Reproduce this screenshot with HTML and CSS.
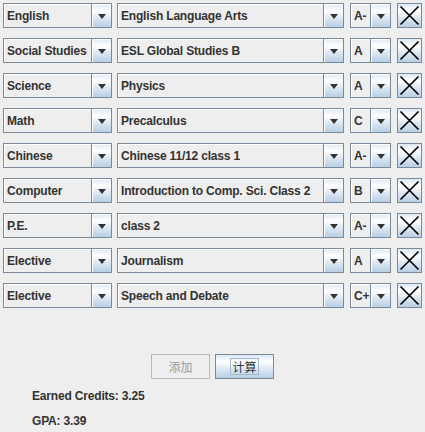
FILE: index.html
```html
<!DOCTYPE html>
<html>
<head>
<meta charset="utf-8">
<link rel="stylesheet" href="styles.css">
</head>
<body>
<div class="rows">
  <div class="row">
    <div class="combo c-subj"><span class="val">English</span><span class="arrow"><i class="tri"></i></span></div>
    <div class="combo c-course"><span class="val">English Language Arts</span><span class="arrow"><i class="tri"></i></span></div>
    <div class="combo c-grade"><span class="val">A-</span><span class="arrow"><i class="tri"></i></span></div>
    <div class="xbtn"><svg viewBox="0 0 25 25" width="25" height="25"><path d="M3.5 3.5L21.5 21.5M21.5 3.5L3.5 21.5" stroke="#000" stroke-width="1.7" fill="none"/></svg></div>
  </div>
  <div class="row">
    <div class="combo c-subj"><span class="val">Social Studies</span><span class="arrow"><i class="tri"></i></span></div>
    <div class="combo c-course"><span class="val">ESL Global Studies B</span><span class="arrow"><i class="tri"></i></span></div>
    <div class="combo c-grade"><span class="val">A</span><span class="arrow"><i class="tri"></i></span></div>
    <div class="xbtn"><svg viewBox="0 0 25 25" width="25" height="25"><path d="M3.5 3.5L21.5 21.5M21.5 3.5L3.5 21.5" stroke="#000" stroke-width="1.7" fill="none"/></svg></div>
  </div>
  <div class="row">
    <div class="combo c-subj"><span class="val">Science</span><span class="arrow"><i class="tri"></i></span></div>
    <div class="combo c-course"><span class="val">Physics</span><span class="arrow"><i class="tri"></i></span></div>
    <div class="combo c-grade"><span class="val">A</span><span class="arrow"><i class="tri"></i></span></div>
    <div class="xbtn"><svg viewBox="0 0 25 25" width="25" height="25"><path d="M3.5 3.5L21.5 21.5M21.5 3.5L3.5 21.5" stroke="#000" stroke-width="1.7" fill="none"/></svg></div>
  </div>
  <div class="row">
    <div class="combo c-subj"><span class="val">Math</span><span class="arrow"><i class="tri"></i></span></div>
    <div class="combo c-course"><span class="val">Precalculus</span><span class="arrow"><i class="tri"></i></span></div>
    <div class="combo c-grade"><span class="val">C</span><span class="arrow"><i class="tri"></i></span></div>
    <div class="xbtn"><svg viewBox="0 0 25 25" width="25" height="25"><path d="M3.5 3.5L21.5 21.5M21.5 3.5L3.5 21.5" stroke="#000" stroke-width="1.7" fill="none"/></svg></div>
  </div>
  <div class="row">
    <div class="combo c-subj"><span class="val">Chinese</span><span class="arrow"><i class="tri"></i></span></div>
    <div class="combo c-course"><span class="val">Chinese 11/12 class 1</span><span class="arrow"><i class="tri"></i></span></div>
    <div class="combo c-grade"><span class="val">A-</span><span class="arrow"><i class="tri"></i></span></div>
    <div class="xbtn"><svg viewBox="0 0 25 25" width="25" height="25"><path d="M3.5 3.5L21.5 21.5M21.5 3.5L3.5 21.5" stroke="#000" stroke-width="1.7" fill="none"/></svg></div>
  </div>
  <div class="row">
    <div class="combo c-subj"><span class="val">Computer</span><span class="arrow"><i class="tri"></i></span></div>
    <div class="combo c-course"><span class="val">Introduction to Comp. Sci. Class 2</span><span class="arrow"><i class="tri"></i></span></div>
    <div class="combo c-grade"><span class="val">B</span><span class="arrow"><i class="tri"></i></span></div>
    <div class="xbtn"><svg viewBox="0 0 25 25" width="25" height="25"><path d="M3.5 3.5L21.5 21.5M21.5 3.5L3.5 21.5" stroke="#000" stroke-width="1.7" fill="none"/></svg></div>
  </div>
  <div class="row">
    <div class="combo c-subj"><span class="val">P.E.</span><span class="arrow"><i class="tri"></i></span></div>
    <div class="combo c-course"><span class="val">class 2</span><span class="arrow"><i class="tri"></i></span></div>
    <div class="combo c-grade"><span class="val">A-</span><span class="arrow"><i class="tri"></i></span></div>
    <div class="xbtn"><svg viewBox="0 0 25 25" width="25" height="25"><path d="M3.5 3.5L21.5 21.5M21.5 3.5L3.5 21.5" stroke="#000" stroke-width="1.7" fill="none"/></svg></div>
  </div>
  <div class="row">
    <div class="combo c-subj"><span class="val">Elective</span><span class="arrow"><i class="tri"></i></span></div>
    <div class="combo c-course"><span class="val">Journalism</span><span class="arrow"><i class="tri"></i></span></div>
    <div class="combo c-grade"><span class="val">A</span><span class="arrow"><i class="tri"></i></span></div>
    <div class="xbtn"><svg viewBox="0 0 25 25" width="25" height="25"><path d="M3.5 3.5L21.5 21.5M21.5 3.5L3.5 21.5" stroke="#000" stroke-width="1.7" fill="none"/></svg></div>
  </div>
  <div class="row">
    <div class="combo c-subj"><span class="val">Elective</span><span class="arrow"><i class="tri"></i></span></div>
    <div class="combo c-course"><span class="val">Speech and Debate</span><span class="arrow"><i class="tri"></i></span></div>
    <div class="combo c-grade"><span class="val">C+</span><span class="arrow"><i class="tri"></i></span></div>
    <div class="xbtn"><svg viewBox="0 0 25 25" width="25" height="25"><path d="M3.5 3.5L21.5 21.5M21.5 3.5L3.5 21.5" stroke="#000" stroke-width="1.7" fill="none"/></svg></div>
  </div>
</div>
<div class="actions">
  <button class="btn btn-disabled" disabled>添加</button>
  <button class="btn btn-primary"><span class="focus">计算</span></button>
</div>
<div class="info">
  <div class="label">Earned Credits: 3.25</div>
  <div class="label">GPA: 3.39</div>
</div>
</body>
</html>
```

FILE: styles.css
```css
html, body {
  margin: 0;
  padding: 0;
  background: #eeeeee;
  width: 425px;
  height: 432px;
  overflow: hidden;
  font-family: "Liberation Sans", Arial, sans-serif;
  font-size: 12px;
  font-weight: bold;
  color: #333333;
  letter-spacing: -0.18px;
}

.rows {
  display: flex;
  flex-direction: column;
  gap: 10px;
  padding: 3px 0 0 3px;
}

.row {
  display: flex;
  height: 25px;
}

.combo {
  display: flex;
  box-sizing: border-box;
  height: 25px;
  border: 1px solid #7a8a99;
  background: #eeeeee;
}

.c-subj { width: 109px; margin-right: 5px; }
.c-course { width: 227px; margin-right: 6px; }
.c-grade { width: 41px; margin-right: 6px; }

.val {
  flex: 1;
  padding: 1px 0 0 3px;
  line-height: 22px;
  white-space: nowrap;
  overflow: hidden;
  box-shadow: inset 1px 1px 0 #ffffff;
}

.arrow {
  width: 19px;
  flex: none;
  border-left: 1px solid #7a8a99;
  display: flex;
  align-items: center;
  justify-content: center;
  background: linear-gradient(to bottom, #dde8f3 0%, #ffffff 30%, #dde8f3 60%, #b8cfe5 100%);
  box-shadow: inset 1px 1px 0 #ffffff;
}

.tri {
  display: block;
  width: 0;
  height: 0;
  margin-top: 1px;
  border-left: 4.5px solid transparent;
  border-right: 4.5px solid transparent;
  border-top: 5px solid #333333;
}

.xbtn {
  box-sizing: border-box;
  width: 25px;
  height: 25px;
  border: 1px solid #7a8a99;
  background: linear-gradient(to bottom, #dde8f3 0%, #ffffff 30%, #dde8f3 60%, #b8cfe5 100%);
  display: flex;
  align-items: center;
  justify-content: center;
  overflow: hidden;
}

.xbtn svg {
  display: block;
  flex: none;
}

.actions {
  display: flex;
  justify-content: center;
  gap: 5px;
  margin-top: 46px;
}

.btn {
  box-sizing: border-box;
  width: 59px;
  height: 25px;
  margin: 0;
  padding: 0;
  font-family: "Noto Sans CJK SC", sans-serif;
  font-size: 12px;
  font-weight: normal;
  letter-spacing: 0;
  display: flex;
  align-items: center;
  justify-content: center;
}

.btn-disabled {
  border: 1px solid #b8b8b8;
  background: #eeeeee;
  color: #999999;
}

.btn-primary {
  border: 1px solid #7a8a99;
  background: linear-gradient(to bottom, #dde8f3 0%, #ffffff 30%, #dde8f3 60%, #b8cfe5 100%);
  color: #333333;
}

.focus {
  border: 1px solid #a3b8cc;
  line-height: 15px;
  padding: 0 1px;
}

.info {
  padding-left: 32px;
  margin-top: 5px;
}

.label {
  line-height: 25px;
}
```
